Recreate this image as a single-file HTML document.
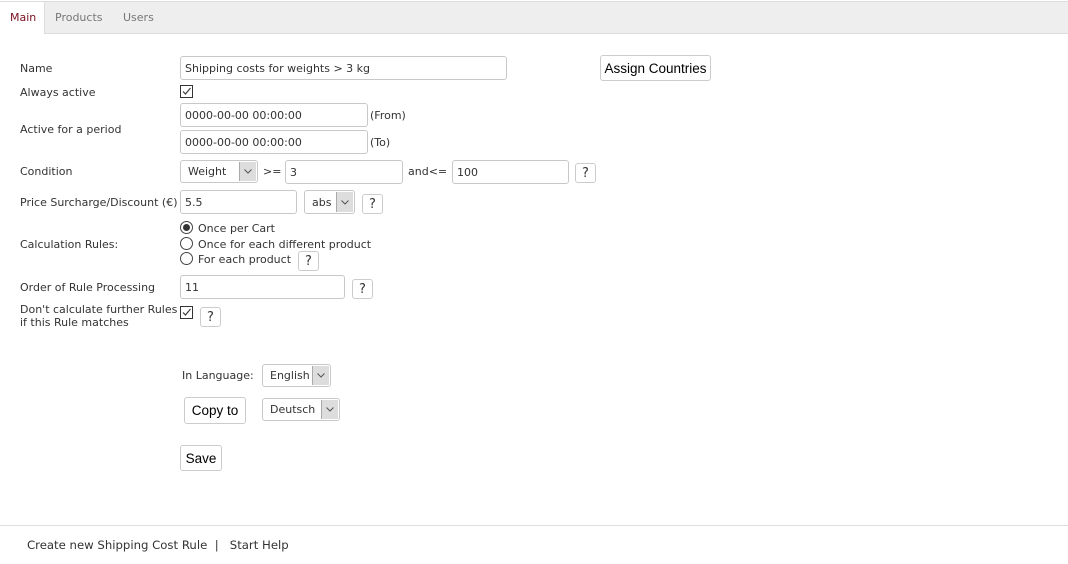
<!DOCTYPE html>
<html><head><style>
body{margin:0;width:1068px;height:564px;background:#fff;font-family:"DejaVu Sans","Liberation Sans",sans-serif;font-size:11px;color:#333;position:relative;overflow:hidden}
.a{position:absolute;white-space:nowrap}
.in{position:absolute;box-sizing:border-box;border:1px solid #c8c8c8;border-radius:3px;background:#fff;padding:0 0 0 4px;font-size:11px;display:flex;align-items:center;color:#333}
.sel .ar{position:absolute;right:1px;top:1px;bottom:1px;width:16px;background:#ddd;border-left:1px solid #aaa;display:flex;align-items:center;justify-content:center}
.btn{position:absolute;box-sizing:border-box;border:1px solid #ccc;border-radius:3px;background:#fff;color:#000;font-family:"Liberation Sans",sans-serif;font-size:13.5px;display:flex;align-items:center;justify-content:center}
.q{position:absolute;box-sizing:border-box;width:21px;height:20px;border:1px solid #ccc;border-radius:3px;background:#fff;font-size:13px;display:flex;align-items:center;justify-content:center;color:#333}
.cb{position:absolute;width:11px;height:11px;border:1px solid #333}
.rd{position:absolute;width:11px;height:11px;border:1px solid #444;border-radius:50%;box-sizing:content-box}
</style></head><body>
<svg width="0" height="0" style="position:absolute"><defs>
<symbol id="chk" viewBox="0 0 11 11"><path d="M2 5.5 L4.5 8 L9.5 2" fill="none" stroke="#333" stroke-width="1.1"/></symbol>
<symbol id="dn" viewBox="0 0 8 5"><path d="M0.5 0.5 L4 4 L7.5 0.5" fill="none" stroke="#555" stroke-width="1"/></symbol>
</defs></svg>
<div class="a" style="left:0;top:1px;width:1068px;height:31px;background:#eee;border-top:1px solid #ddd;border-bottom:1px solid #ddd"></div>
<div class="a" style="left:0;top:2px;width:44px;height:32px;background:#fff;border-right:1px solid #ddd"></div>
<div class="a" style="left:10px;top:11px;color:#7a1020">Main</div>
<div class="a" style="left:55px;top:11px;color:#777">Products</div>
<div class="a" style="left:123px;top:11px;color:#777">Users</div>

<div class="a" style="left:20px;top:62px">Name</div>
<div class="in" style="left:180px;top:56px;width:327px;height:24px">Shipping costs for weights &gt; 3 kg</div>
<div class="btn" style="left:600px;top:55px;width:111px;height:26px">Assign Countries</div>
<div class="a" style="left:20px;top:86px">Always active</div>
<div class="cb" style="left:180px;top:85px"><svg width="11" height="11"><use href="#chk"/></svg></div>
<div class="a" style="left:20px;top:123px">Active for a period</div>
<div class="in" style="left:180px;top:103px;width:188px;height:24px">0000-00-00 00:00:00</div>
<div class="a" style="left:370px;top:109px">(From)</div>
<div class="in" style="left:180px;top:130px;width:188px;height:24px">0000-00-00 00:00:00</div>
<div class="a" style="left:370px;top:136px">(To)</div>

<div class="a" style="left:20px;top:165px">Condition</div>
<div class="in sel" style="left:180px;top:160px;width:78px;height:23px;padding-left:7px">Weight<span class="ar"><svg width="8" height="5"><use href="#dn"/></svg></span></div>
<div class="a" style="left:263px;top:165px">&gt;=</div>
<div class="in" style="left:285px;top:160px;width:118px;height:24px">3</div>
<div class="a" style="left:408px;top:165px">and&lt;=</div>
<div class="in" style="left:452px;top:160px;width:117px;height:24px">100</div>
<div class="q" style="left:575px;top:163px">?</div>

<div class="a" style="left:20px;top:196px">Price Surcharge/Discount (€)</div>
<div class="in" style="left:180px;top:190px;width:117px;height:24px">5.5</div>
<div class="in sel" style="left:304px;top:190px;width:51px;height:24px;padding-left:7px">abs<span class="ar"><svg width="8" height="5"><use href="#dn"/></svg></span></div>
<div class="q" style="left:362px;top:194px">?</div>

<div class="a" style="left:20px;top:238px">Calculation Rules:</div>
<div class="rd" style="left:180px;top:221px"><div style="position:absolute;left:2px;top:2px;width:7px;height:7px;border-radius:50%;background:#333"></div></div>
<div class="a" style="left:198px;top:222px">Once per Cart</div>
<div class="rd" style="left:180px;top:237px"></div>
<div class="a" style="left:198px;top:238px">Once for each different product</div>
<div class="rd" style="left:180px;top:252px"></div>
<div class="a" style="left:198px;top:253px">For each product</div>
<div class="q" style="left:298px;top:251px">?</div>

<div class="a" style="left:20px;top:281px">Order of Rule Processing</div>
<div class="in" style="left:180px;top:275px;width:165px;height:24px">11</div>
<div class="q" style="left:352px;top:279px">?</div>

<div class="a" style="left:20px;top:303px">Don't calculate further Rules</div>
<div class="a" style="left:20px;top:316px">if this Rule matches</div>
<div class="cb" style="left:180px;top:306px"><svg width="11" height="11"><use href="#chk"/></svg></div>
<div class="q" style="left:200px;top:307px">?</div>

<div class="a" style="left:182px;top:369px">In Language:</div>
<div class="in sel" style="left:262px;top:364px;width:69px;height:23px;padding-left:7px">English<span class="ar"><svg width="8" height="5"><use href="#dn"/></svg></span></div>
<div class="btn" style="left:184px;top:397px;width:62px;height:27px">Copy to</div>
<div class="in sel" style="left:262px;top:398px;width:78px;height:23px;padding-left:7px">Deutsch<span class="ar"><svg width="8" height="5"><use href="#dn"/></svg></span></div>
<div class="btn" style="left:180px;top:445px;width:42px;height:26px">Save</div>

<div class="a" style="left:0;top:525px;width:1068px;border-top:1px solid #ddd"></div>
<div class="a" style="left:27px;top:538px;font-size:11.7px">Create new Shipping Cost Rule &nbsp;|&nbsp;&nbsp; Start Help</div>
</body></html>
